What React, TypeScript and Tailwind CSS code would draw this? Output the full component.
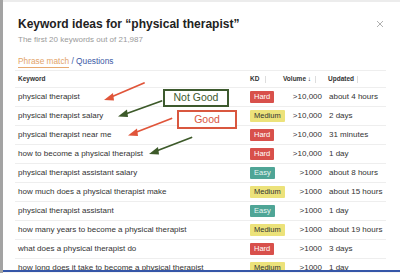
import React from "react";

type Row = { k: string; kd: "Hard" | "Medium" | "Easy"; v: string; u: string };

const rows: Row[] = [
  { k: "physical therapist", kd: "Hard", v: ">10,000", u: "about 4 hours" },
  { k: "physical therapist salary", kd: "Medium", v: ">10,000", u: "2 days" },
  { k: "physical therapist near me", kd: "Hard", v: ">10,000", u: "31 minutes" },
  { k: "how to become a physical therapist", kd: "Hard", v: ">10,000", u: "1 day" },
  { k: "physical therapist assistant salary", kd: "Easy", v: ">1000", u: "about 8 hours" },
  { k: "how much does a physical therapist make", kd: "Medium", v: ">1000", u: "about 15 hours" },
  { k: "physical therapist assistant", kd: "Easy", v: ">1000", u: "1 day" },
  { k: "how many years to become a physical therapist", kd: "Medium", v: ">1000", u: "about 19 hours" },
  { k: "what does a physical therapist do", kd: "Hard", v: ">1000", u: "3 days" },
  { k: "how long does it take to become a physical therapist", kd: "Medium", v: ">1000", u: "1 day" },
];

function Badge({ kd }: { kd: Row["kd"] }) {
  if (kd === "Hard")
    return <span className="inline-block rounded-[1px] bg-[#d8504b] px-[4px] text-[7.5px] leading-[12px] text-white">Hard</span>;
  if (kd === "Medium")
    return <span className="inline-block rounded-[1px] bg-[#ece27a] px-[4px] text-[7.5px] leading-[12px] text-[#333]">Medium</span>;
  return <span className="inline-block rounded-[1px] bg-[#4fa596] px-[4px] text-[7.5px] leading-[12px] text-[#e8f5f2]">Easy</span>;
}

export default function App() {
  return (
    <div className="relative flex h-[273px] w-[400px] overflow-hidden bg-white" style={{ fontFamily: '"Liberation Sans", Arial, sans-serif' }}>
      <div className="w-[3px] shrink-0 bg-[#a3a3a3]" />
      <div className="flex flex-1 flex-col border-t-[2px] border-[#ececec]">
        <div className="flex items-start justify-between pl-[15px] pr-[16px] pt-[15px]">
          <div>
            <div className="text-[12px] font-bold leading-[14px] text-[#222]">Keyword ideas for “physical therapist”</div>
            <div className="mt-[4px] text-[8px] leading-[10px] text-[#9a9a9a]">The first 20 keywords out of 21,987</div>
          </div>
          <svg width="8" height="8" viewBox="0 0 8 8" className="mt-[3px]">
            <path d="M1 1 L7 7 M7 1 L1 7" stroke="#b0b0b0" strokeWidth="1" />
          </svg>
        </div>
        <div className="mt-[11px] flex items-end pl-[15px] text-[8.3px] leading-[10px]">
          <span className="border-b border-[#e7a96f] pb-[1px] text-[#e3a46a]">Phrase match</span>
          <span className="pb-[2px] text-[#3c5aa6]">&nbsp;/ Questions</span>
        </div>
        <div className="ml-[12px] mr-[14px] mt-[2px] border-t border-[#eeeeee]">
          <div className="flex h-[17px] items-center border-b border-[#eeeeee] text-[6.5px] font-bold text-[#333]">
            <div className="w-[235px] pl-[3px]">Keyword</div>
            <div className="flex w-[33px] items-center">
              KD<span className="ml-[6px] h-[7px] w-px bg-[#dddddd]" />
            </div>
            <div className="flex w-[42px] items-center">
              Volume ↓<span className="ml-[4px] h-[7px] w-px bg-[#dddddd]" />
            </div>
            <div className="flex items-center pl-[3px]">
              Updated<span className="ml-[3px] h-[7px] w-px bg-[#dddddd]" />
            </div>
          </div>
          {rows.map((r, i) => (
            <div key={i} className="flex h-[19px] items-center border-b border-[#eeeeee] text-[8px] text-[#333]">
              <div className="w-[235px] whitespace-nowrap pl-[3px]">{r.k}</div>
              <div className="w-[37px]"><Badge kd={r.kd} /></div>
              <div className="w-[35px] text-right">{r.v}</div>
              <div className="whitespace-nowrap pl-[7px]">{r.u}</div>
            </div>
          ))}
        </div>
      </div>

      <svg className="pointer-events-none absolute left-0 top-0" width="400" height="273" viewBox="0 0 400 273">
        <g strokeWidth="1.8" strokeLinecap="round">
          <line x1="144" y1="83" x2="110" y2="97.5" stroke="#e0553a" />
          <path d="M104 100 L113 93 L114 100.5 Z" fill="#e0553a" />
          <line x1="161.5" y1="101" x2="124" y2="114.5" stroke="#3d5a2a" />
          <path d="M118 116.5 L127 109.5 L128 117 Z" fill="#3d5a2a" />
          <line x1="171.5" y1="118.5" x2="134" y2="133" stroke="#e0553a" />
          <path d="M128 135.5 L137 128.5 L138 136 Z" fill="#e0553a" />
          <line x1="191.5" y1="137.5" x2="155" y2="151.5" stroke="#3d5a2a" />
          <path d="M149 154 L158 147 L159 154.5 Z" fill="#3d5a2a" />
        </g>
      </svg>

      <div className="absolute left-[163px] top-[89px] flex h-[18px] w-[66px] items-center justify-center border-[2px] border-[#3d5a2e] bg-white text-[10.5px] text-[#3d5a2e]">
        Not Good
      </div>
      <div className="absolute left-[177px] top-[110px] flex h-[19px] w-[60px] items-center justify-center border-[2px] border-[#d9573f] bg-white text-[10.5px] text-[#d9573f]">
        Good
      </div>

      <div className="absolute bottom-0 left-[3px] right-0 h-[3px] border-t-[2px] border-[#3556a8] bg-[#f4f4f4]" />
    </div>
  );
}
